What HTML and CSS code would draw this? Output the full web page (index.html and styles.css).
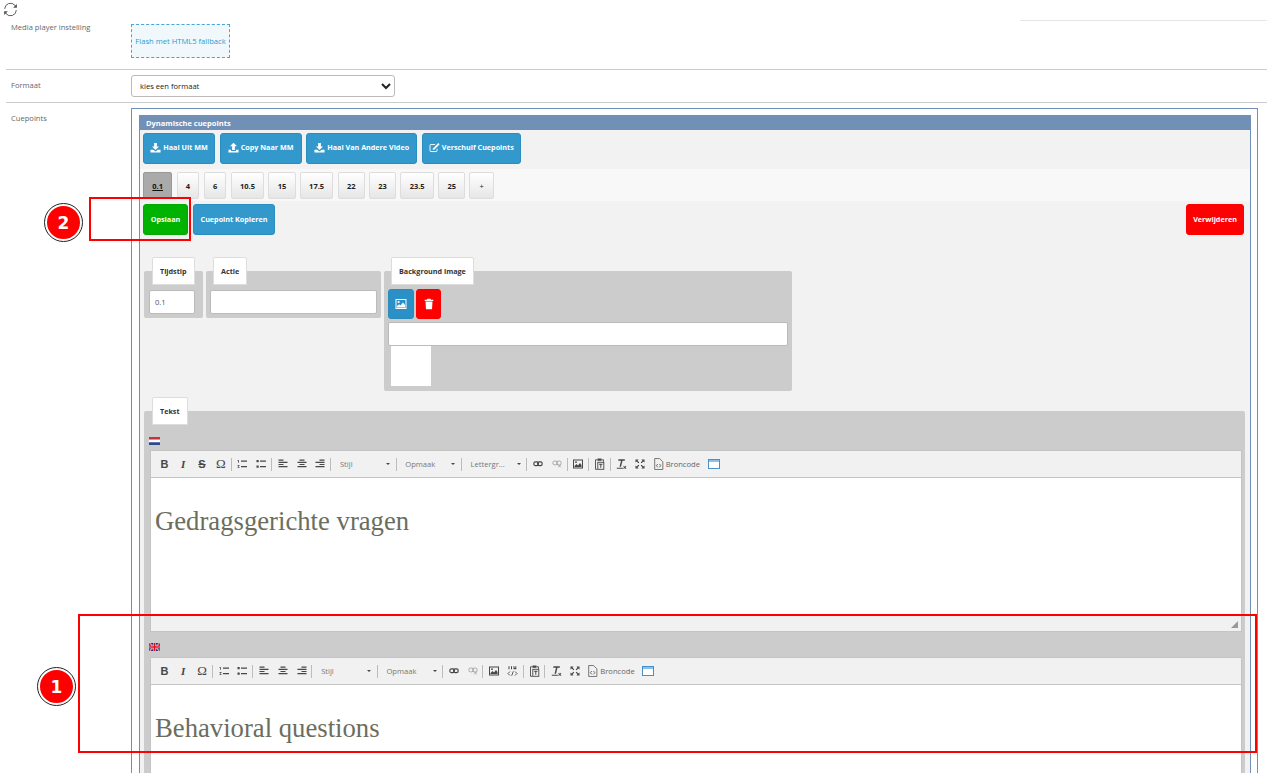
FILE: index.html
```html
<!DOCTYPE html>
<html lang="nl">
<head>
<meta charset="utf-8">
<title>Cuepoints</title>
<link rel="stylesheet" href="styles.css">
</head>
<body>
<svg class="defs" aria-hidden="true">
  <symbol id="i-refresh" viewBox="0 0 16 16"><g fill="none" stroke="currentColor" stroke-width="1"><path d="M1.800 7.400A6.200 6.200 0 0 1 12.800 3.600L14 5"/><path d="M14.200 8.600A6.200 6.200 0 0 1 3.200 12.400L2 11"/></g><path fill="currentColor" d="M14.800 2.200v4h-4zM1.200 13.800v-4h4z"/></symbol>
  <symbol id="i-down" viewBox="0 0 12 12"><path fill="currentColor" d="M4.500 1h3v4h2.300L6 8.600 2.200 5h2.300zM.5 8.400h3L6 10.400l2.500-2h3v3h-11z"/></symbol>
  <symbol id="i-up" viewBox="0 0 12 12"><path fill="currentColor" d="M6 .8 9.800 4.500H7.500v4.200h-3V4.500H2.200zM.5 8.400h2.800v1.300h5.400V8.400h2.800v3h-11z"/></symbol>
  <symbol id="i-edit" viewBox="0 0 13 12"><path fill="none" stroke="currentColor" stroke-width="1.100" d="M9.500 7.500v2.300a1 1 0 0 1-1 1H2.200a1 1 0 0 1-1-1V3.500a1 1 0 0 1 1-1h5"/><path fill="currentColor" d="M11 .8l1.500 1.500-6 6-2.100.6.600-2.100z"/></symbol>
  <symbol id="i-picture" viewBox="0 0 12 12"><path fill="currentColor" fill-rule="evenodd" d="M.5 1h11v10H.5zM1.500 2v8h9V2z"/><circle fill="currentColor" cx="3.600" cy="4" r="1.100"/><path fill="currentColor" d="M2 9.500V8l2.200-1.800L5.500 7.400 8 4.600l2 2.400v2.500z"/></symbol>
  <symbol id="i-trash" viewBox="0 0 12 12"><path fill="currentColor" d="M4.500.8h3l.5 1h2.300v1.200H1.700V1.800H4zM2.500 3.600h7l-.5 7.600H3z"/></symbol>
  <symbol id="t-ol" viewBox="0 0 10 10"><path fill="currentColor" d="M4 1.500h6v1.300H4zM4 7h6v1.300H4zM.5 1h1.300v2.800H1V1.700H.5zM.5 6h2v.7L1.300 8h1.200v.8h-2v-.6l1.200-1.400H.5z"/></symbol>
  <symbol id="t-ul" viewBox="0 0 10 10"><path fill="currentColor" d="M4 1.500h6v1.300H4zM4 7h6v1.300H4zM.5 1h2.200v2.200H.5zM.5 6.500h2.200v2.200H.5z"/></symbol>
  <symbol id="t-left" viewBox="0 0 10 10"><path fill="currentColor" d="M.5 .5h5v1.200h-5zM.5 2.700h9v1.200h-9zM.5 4.900h5v1.200h-5zM.5 7.100h9v1.200h-9z"/></symbol>
  <symbol id="t-center" viewBox="0 0 10 10"><path fill="currentColor" d="M2.500 .5h5v1.200h-5zM.5 2.700h9v1.200h-9zM2.500 4.900h5v1.200h-5zM.5 7.100h9v1.200h-9z"/></symbol>
  <symbol id="t-right" viewBox="0 0 10 10"><path fill="currentColor" d="M4.500 .5h5v1.200h-5zM.5 2.700h9v1.200h-9zM4.500 4.900h5v1.200h-5zM.5 7.100h9v1.200h-9z"/></symbol>
  <symbol id="t-link" viewBox="0 0 12 10"><g fill="none" stroke="currentColor" stroke-width="1.400"><rect x="1" y="2.500" width="5.500" height="4.500" rx="2"/><rect x="5.500" y="2.500" width="5.500" height="4.500" rx="2"/></g></symbol>
  <symbol id="t-unlink" viewBox="0 0 12 10"><g fill="none" stroke="currentColor" stroke-width="1.100" opacity=".45"><rect x="1" y="1.500" width="5.500" height="4.500" rx="2"/><rect x="5.500" y="1.500" width="5.500" height="4.500" rx="2"/><path d="M7.500 6l3 3M10.500 6l-3 3"/></g></symbol>
  <symbol id="t-image" viewBox="0 0 10 10"><path fill="currentColor" fill-rule="evenodd" d="M0 .5h10v9H0zM1 1.500v7h8v-7z"/><path fill="currentColor" d="M1.500 8V7l2-2 1.500 1.500L7 4l1.500 2v2z"/><circle fill="currentColor" cx="3" cy="3.200" r=".9"/></symbol>
  <symbol id="t-paste" viewBox="0 0 10 12"><path fill="none" stroke="currentColor" stroke-width=".9" d="M3 1.800H1v9.500h2M7 1.800h2v2"/><path fill="currentColor" d="M3 .5h4v2.300H3z"/><rect fill="none" stroke="currentColor" stroke-width=".9" x="3.300" y="4.300" width="6" height="7"/><path fill="currentColor" d="M4.600 5.800h3.400v1H6.800v3H5.800v-3H4.600z"/></symbol>
  <symbol id="t-clear" viewBox="0 0 11 11"><path fill="currentColor" d="M2.500 .8h6.300v1.400H6.500L5 8.300H3.500L5 2.200H2.200zM.8 9.200h6v1h-6zM7.800 7.200l1 1 1-1 .6.600-1 1 1 1-.6.600-1-1-1 1-.6-.6 1-1-1-1z"/></symbol>
  <symbol id="t-max" viewBox="0 0 10 10"><path fill="currentColor" d="M.5.500h3L2.600 1.700 4.300 3.400 3.400 4.300 1.700 2.600.5 3.500zM9.500.5v3L8.300 2.600 6.600 4.300 5.700 3.400 7.400 1.700 6.500.5zM.5 9.500v-3l1.200.9 1.700-1.700.9.900-1.700 1.700.9 1.200zM9.500 9.500h-3l.9-1.200-1.700-1.700.9-.9 1.700 1.700 1.200-.9z"/></symbol>
  <symbol id="t-source" viewBox="0 0 9 11"><path fill="none" stroke="currentColor" stroke-width=".8" d="M1 .5h4.500L8.500 3.500v7H1z"/><path fill="none" stroke="currentColor" stroke-width=".9" d="M3.800 5.500 2.600 7l1.200 1.500M5.400 5.500 6.600 7 5.400 8.500"/></symbol>
  <symbol id="t-blocks" viewBox="0 0 12 10"><rect x=".5" y=".5" width="11" height="9" fill="#fff" stroke="#4a90c8"/><rect x="1" y="1" width="10" height="2" fill="#8cc0e8"/></symbol>
  <symbol id="t-code" viewBox="0 0 11 11"><g fill="currentColor"><path d="M1.500.8h1v3h-1zM4 .8h1v3H4zM6.500.8h1v1.800h.8v-1.800h1v3h-2.800z"/></g><path fill="none" stroke="currentColor" stroke-width=".9" d="M3 6 1 8l2 2M8 6l2 2-2 2M6.300 5.800 4.700 10.200"/></symbol>
  <symbol id="f-nl" viewBox="0 0 11 8"><rect width="11" height="2.700" fill="#c8313e"/><rect y="2.700" width="11" height="2.700" fill="#fff"/><rect y="5.300" width="11" height="2.700" fill="#2a4a90"/></symbol>
  <symbol id="f-uk" viewBox="0 0 11 8"><rect width="11" height="8" fill="#20307f"/><path stroke="#fff" stroke-width="1.400" d="M0 0l11 8M11 0 0 8"/><path stroke="#e01020" stroke-width=".8" d="M0 0l11 8M11 0 0 8"/><path stroke="#fff" stroke-width="2.400" d="M5.500 0v8M0 4h11"/><path stroke="#e01020" stroke-width="1.700" d="M5.500 0v8M0 4h11"/></symbol>
  <symbol id="t-grip" viewBox="0 0 7 7"><path fill="#999" d="M7 0v7H0z"/></symbol>
</svg>

<div class="page">
  <div class="topbar">
    <svg class="refresh"><use href="#i-refresh"/></svg>
    <div class="topline"></div>
  </div>

  <div class="row row-media">
    <div class="label">Media player instelling</div>
    <div class="flash">Flash met HTML5 fallback</div>
  </div>

  <div class="row row-format">
    <div class="label">Formaat</div>
    <select class="select"><option>kies een formaat</option></select>
  </div>

  <div class="row row-cue">
    <div class="label">Cuepoints</div>
    <div class="outer">
      <div class="panel">
        <div class="panel-head">Dynamische cuepoints</div>

        <div class="btn-row">
          <button class="btn"><svg class="ic"><use href="#i-down"/></svg>Haal Uit MM</button>
          <button class="btn"><svg class="ic"><use href="#i-up"/></svg>Copy Naar MM</button>
          <button class="btn"><svg class="ic"><use href="#i-down"/></svg>Haal Van Andere Video</button>
          <button class="btn"><svg class="ic"><use href="#i-edit"/></svg>Verschuif Cuepoints</button>
        </div>

        <div class="tabs">
          <span class="tab tab-active">0.1</span>
          <span class="tab">4</span>
          <span class="tab">6</span>
          <span class="tab">10.5</span>
          <span class="tab">15</span>
          <span class="tab">17.5</span>
          <span class="tab">22</span>
          <span class="tab">23</span>
          <span class="tab">23.5</span>
          <span class="tab">25</span>
          <span class="tab tab-add">+</span>
        </div>

        <div class="actions">
          <button class="btn btn-green">Opslaan</button>
          <button class="btn btn-copy">Cuepoint Kopieren</button>
          <button class="btn btn-red btn-end">Verwijderen</button>
        </div>

        <div class="groups">
          <div class="group group-time">
            <div class="legend">Tijdstip</div>
            <input class="input input-time" value="0.1">
          </div>
          <div class="group group-action">
            <div class="legend">Actie</div>
            <input class="input input-action">
          </div>
          <div class="group group-bg">
            <div class="legend">Background image</div>
            <div class="bg-btns">
              <button class="sq sq-blue"><svg class="sq-ic"><use href="#i-picture"/></svg></button>
              <button class="sq sq-red"><svg class="sq-ic"><use href="#i-trash"/></svg></button>
            </div>
            <input class="input input-bg">
            <div class="thumb"></div>
          </div>
        </div>

        <div class="group group-text">
          <div class="legend">Tekst</div>

          <svg class="flag flag-first"><use href="#f-nl"/></svg>
          <div class="editor">
            <div class="toolbar">
              <span class="tb tb-b">B</span><span class="tb tb-i">I</span><span class="tb tb-s">S</span><span class="tb tb-o">Ω</span><span class="sep"></span>
              <span class="tb"><svg class="ti"><use href="#t-ol"/></svg></span><span class="tb"><svg class="ti"><use href="#t-ul"/></svg></span><span class="sep"></span>
              <span class="tb"><svg class="ti"><use href="#t-left"/></svg></span><span class="tb"><svg class="ti"><use href="#t-center"/></svg></span><span class="tb"><svg class="ti"><use href="#t-right"/></svg></span><span class="sep"></span>
              <span class="combo">Stijl</span><span class="sep"></span>
              <span class="combo">Opmaak</span><span class="sep"></span>
              <span class="combo">Lettergr...</span><span class="sep"></span>
              <span class="tb"><svg class="ti"><use href="#t-link"/></svg></span><span class="tb"><svg class="ti"><use href="#t-unlink"/></svg></span><span class="sep"></span>
              <span class="tb"><svg class="ti"><use href="#t-image"/></svg></span><span class="sep"></span>
              <span class="tb"><svg class="ti ti-tall"><use href="#t-paste"/></svg></span><span class="sep"></span>
              <span class="tb"><svg class="ti ti-tall"><use href="#t-clear"/></svg></span><span class="tb"><svg class="ti"><use href="#t-max"/></svg></span>
              <span class="source"><svg class="ti ti-tall"><use href="#t-source"/></svg>Broncode</span>
              <span class="tb"><svg class="ti ti-wide"><use href="#t-blocks"/></svg></span>
            </div>
            <div class="content"><p class="content-text">Gedragsgerichte vragen</p></div>
            <div class="editor-foot"><svg class="grip"><use href="#t-grip"/></svg></div>
          </div>

          <svg class="flag flag-second"><use href="#f-uk"/></svg>
          <div class="editor">
            <div class="toolbar">
              <span class="tb tb-b">B</span><span class="tb tb-i">I</span><span class="tb tb-o">Ω</span><span class="sep"></span>
              <span class="tb"><svg class="ti"><use href="#t-ol"/></svg></span><span class="tb"><svg class="ti"><use href="#t-ul"/></svg></span><span class="sep"></span>
              <span class="tb"><svg class="ti"><use href="#t-left"/></svg></span><span class="tb"><svg class="ti"><use href="#t-center"/></svg></span><span class="tb"><svg class="ti"><use href="#t-right"/></svg></span><span class="sep"></span>
              <span class="combo">Stijl</span><span class="sep"></span>
              <span class="combo">Opmaak</span><span class="sep"></span>
              <span class="tb"><svg class="ti"><use href="#t-link"/></svg></span><span class="tb"><svg class="ti"><use href="#t-unlink"/></svg></span><span class="sep"></span>
              <span class="tb"><svg class="ti"><use href="#t-image"/></svg></span><span class="tb"><svg class="ti ti-tall"><use href="#t-code"/></svg></span><span class="sep"></span>
              <span class="tb"><svg class="ti ti-tall"><use href="#t-paste"/></svg></span><span class="sep"></span>
              <span class="tb"><svg class="ti ti-tall"><use href="#t-clear"/></svg></span><span class="tb"><svg class="ti"><use href="#t-max"/></svg></span>
              <span class="source"><svg class="ti ti-tall"><use href="#t-source"/></svg>Broncode</span>
              <span class="tb"><svg class="ti ti-wide"><use href="#t-blocks"/></svg></span>
            </div>
            <div class="content"><p class="content-text">Behavioral questions</p></div>
          </div>
        </div>
      </div>
    </div>
  </div>

  <div class="mark mark-1"></div>
  <div class="mark mark-2"></div>
  <div class="badge badge-1">1</div>
  <div class="badge badge-2">2</div>
</div>
</body>
</html>
```
FILE: styles.css
```css
* { box-sizing: border-box; }

html, body { margin: 0; padding: 0; background: #fff; }

body { font-family: "Open Sans", "Liberation Sans", sans-serif; font-size: 7.600px; color: #555; }

.defs { position: absolute; width: 0; height: 0; overflow: hidden; }

.page { position: relative; width: 1267px; height: 773px; overflow: hidden; }

.topbar { display: flex; justify-content: space-between; height: 21px; }

.refresh { width: 15px; height: 15px; margin: 2px 0 0 3px; color: #555; }

.topline { width: 247px; height: 21px; border-bottom: 1px solid #e6e6e6; }

.row { display: flex; margin-left: 6px; padding-left: 5px; border-bottom: 1px solid #ccc; }

.label { width: 120px; flex: none; color: #666; line-height: 13px; }

.row-media { height: 49px; }

.flash { width: 99px; height: 34px; margin-top: 3px; border: 1px dashed #4aa5d5; background: #f0f8fc; color: #2a9ad0; text-align: center; line-height: 32px; white-space: nowrap; }

.row-format { height: 33px; padding-top: 5px; }
.row-format .label { padding-top: 4px; }

.select { width: 264px; height: 22px; padding-left: 4px; border: 1px solid #bbb; border-radius: 3px; background: #fff; color: #222; font: 7.600px "Open Sans", sans-serif; }

.row-cue { border: 0; padding-top: 5px; height: 700px; }
.row-cue .label { padding-top: 4px; }

.outer { width: 1127px; height: 800px; padding: 6px 6px 0 7px; border: 1px solid #7090b5; border-bottom: 0; }

.panel { height: 800px; border: 1px solid #7090b5; border-top: 0; background: #f2f2f2; }

.panel-head { height: 15px; margin: 0 -1px; padding-left: 7px; background: #7090b5; color: #fff; font-weight: 700; font-size: 7.500px; line-height: 16px; }

.btn-row { display: flex; gap: 4.600px; height: 39px; padding: 3px 0 0 3px; }

.btn { display: inline-flex; align-items: center; justify-content: center; gap: 2px; height: 31px; padding: 0 0 2px; border: 1px solid #2b8cbe; border-radius: 3px; background: #3399cc; color: #fff; font: 700 7.200px "Open Sans", sans-serif; white-space: nowrap; }

.btn-row .btn { padding-bottom: 3px; }
.btn-row .btn:nth-child(1) { width: 72px; }
.btn-row .btn:nth-child(2) { width: 82px; }
.btn-row .btn:nth-child(3) { width: 111px; }
.btn-row .btn:nth-child(4) { width: 99px; }

.ic { width: 11px; height: 11px; flex: none; }

.tabs { display: flex; gap: 4.200px; height: 32px; padding: 3px 0 0 3px; background: #f8f8f8; }

.tab { display: flex; align-items: center; justify-content: center; height: 27px; padding: 0 8.300px; border: 1px solid #ddd; border-radius: 2px; background: linear-gradient(#fff, #e6e6e6); color: #222; font-weight: 700; font-size: 7.500px; white-space: nowrap; }

.tab-active { border-color: #999; background: #aaa; color: #111; text-decoration: underline; }

.tab-add { padding: 0 9px; font-weight: 400; }

.actions { display: flex; gap: 5px; padding: 3px 6px 0 3px; }

.btn-green { width: 45px; border-color: #00a800; background: #00b300; }
.btn-copy { width: 82px; }
.btn-red { width: 58px; border-color: #f00; background: #f00; }
.btn-end { margin-left: auto; }

.groups { display: flex; align-items: flex-start; gap: 3px; padding: 36px 0 0 4px; }

.group { border-radius: 2px; background: #ccc; }

.legend { width: max-content; height: 28px; margin: -14px 0 0 8px; padding: 0 7px; border: 1px solid #ddd; border-radius: 2px 2px 0 0; background: #fff; color: #333; font-weight: 700; font-size: 7.200px; line-height: 26px; }

.group-time { width: 59px; height: 47px; }
.group-action { width: 175px; height: 47px; }
.group-action .legend { margin-left: 7px; }
.group-bg { width: 408px; height: 120px; }
.group-bg .legend { margin-left: 7px; }

.input { display: block; height: 24px; border: 1px solid #bbb; border-radius: 2px; background: #fff; color: #555; font: 7.600px "Open Sans", sans-serif; padding: 0 5px; }

.input-time { width: 46px; margin: 5px 0 0 5px; }
.input-action { width: 167px; margin: 5px 0 0 4px; }
.input-bg { width: 400px; margin: 3px 0 0 4px; }

.bg-btns { display: flex; gap: 2px; margin: 4px 0 0 4px; }

.sq { display: flex; align-items: center; justify-content: center; width: 26px; height: 30px; padding: 0; border: 1px solid #2b8cbe; border-radius: 3px; background: #2b90c5; color: #fff; }
.sq-red { width: 25px; border-color: #f00; background: #f00; }
.sq-ic { width: 12px; height: 12px; }

.thumb { width: 40px; height: 40px; margin-left: 7px; background: #fff; }

.group-text { display: flow-root; width: 1101px; height: 700px; margin: 20px 0 0 4px; padding: 0 3px 0 6px; }
.group-text .legend { margin-left: 2px; }

.flag { display: block; width: 11px; height: 8px; margin: 11px 0 6px -1px; }
.flag-first { margin: 12px 0 5px -1px; }

.editor { border: 1px solid #c4c4c4; background: #fff; }

.toolbar { display: flex; align-items: center; height: 27px; padding-left: 4px; border-bottom: 1px solid #c4c4c4; background: #f1f1f1; color: #474747; }

.tb { display: flex; align-items: center; justify-content: center; width: 18.800px; height: 20px; flex: none; font-size: 10px; line-height: 1; }

.tb-b { font: 700 11px "Liberation Sans", sans-serif; }
.tb-i { font: italic 700 11px "Liberation Serif", serif; }
.tb-s { font: 700 11px "Liberation Sans", sans-serif; text-decoration: line-through; }
.tb-o { font: 400 13px "Liberation Serif", serif; }

.sep { width: 1px; height: 13px; margin: 0 1.300px 0 .5px; flex: none; background: #bcbcbc; }

.ti { width: 10px; height: 10px; }
.ti-tall { width: 11px; height: 12px; }
.ti-wide { width: 12px; height: 10px; }

.combo { position: relative; width: 62.500px; flex: none; padding-left: 7.400px; color: #777; line-height: 20px; white-space: nowrap; }

.combo::after { content: ""; position: absolute; right: 5px; top: 9px; border: 2.500px solid transparent; border-top-color: #474747; border-bottom: 0; }

.source { display: flex; align-items: center; gap: 2px; width: 54.500px; flex: none; padding-left: 3px; color: #666; white-space: nowrap; }

.content { height: 137px; padding: 30px 4px 0; background: #fff; }

.content-text { margin: 0; color: #6b6e5e; font: 26.700px/26px "Liberation Serif", serif; }

.editor-foot { display: flex; align-items: flex-end; justify-content: flex-end; height: 16px; padding: 0 3px 3px 0; border-top: 1px solid #c4c4c4; background: #f1f1f1; }

.grip { width: 7px; height: 7px; }

.mark { position: absolute; border: 2px solid #f00; }
.mark-1 { left: 78px; top: 614px; width: 1179px; height: 139px; }
.mark-2 { left: 89px; top: 197px; width: 102px; height: 44px; }

.badge { position: absolute; display: flex; align-items: center; justify-content: center; width: 37px; height: 37px; border: 2px solid #fff; border-radius: 50%; outline: 1px solid #222; background: #f00; color: #fff; font: 700 17px "DejaVu Sans", sans-serif; }

.badge-1 { left: 38px; top: 668px; }
.badge-2 { left: 45px; top: 204px; }
```
